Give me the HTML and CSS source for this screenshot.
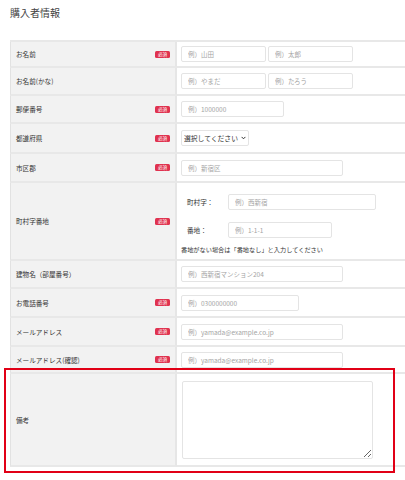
FILE: index.html
```html
<!DOCTYPE html>
<html lang="ja">
<head>
<meta charset="utf-8">
<title>購入者情報</title>
<link rel="stylesheet" href="styles.css">
</head>
<body>
<div class="page">
  <h1 class="title">購入者情報</h1>
  <div class="form">
    <div class="label"><span>お名前</span><span class="req">必須</span></div>
    <div class="value">
      <input class="in w85" type="text" placeholder="例）山田">
      <input class="in w85" type="text" placeholder="例）太郎">
    </div>

    <div class="label"><span>お名前(かな)</span></div>
    <div class="value">
      <input class="in w85" type="text" placeholder="例）やまだ">
      <input class="in w85" type="text" placeholder="例）たろう">
    </div>

    <div class="label"><span>郵便番号</span><span class="req">必須</span></div>
    <div class="value">
      <input class="in w103" type="text" placeholder="例）1000000">
    </div>

    <div class="label"><span>都道府県</span><span class="req">必須</span></div>
    <div class="value">
      <div class="select-wrap">
        <select class="sel"><option>選択してください</option></select>
        <svg class="chev" width="5" height="4" viewBox="0 0 5 4"><path d="M0.6 0.9 L2.5 2.8 L4.4 0.9" fill="none" stroke="#333" stroke-width="1"/></svg>
      </div>
    </div>

    <div class="label"><span>市区郡</span><span class="req">必須</span></div>
    <div class="value">
      <input class="in w162" type="text" placeholder="例）新宿区">
    </div>

    <div class="label"><span>町村字番地</span><span class="req">必須</span></div>
    <div class="value addr">
      <div class="sub"><span class="sublabel">町村字：</span><input class="in w148" type="text" placeholder="例）西新宿"></div>
      <div class="sub sub2"><span class="sublabel">番地：</span><input class="in w104" type="text" placeholder="例）1-1-1"></div>
      <p class="note">番地がない場合は「番地なし」と入力してください</p>
    </div>

    <div class="label"><span>建物名（部屋番号）</span></div>
    <div class="value">
      <input class="in w162" type="text" placeholder="例）西新宿マンション204">
    </div>

    <div class="label"><span>お電話番号</span><span class="req">必須</span></div>
    <div class="value">
      <input class="in w118" type="text" placeholder="例）0300000000">
    </div>

    <div class="label"><span>メールアドレス</span><span class="req">必須</span></div>
    <div class="value">
      <input class="in w162" type="text" placeholder="例）yamada@example.co.jp">
    </div>

    <div class="label"><span>メールアドレス(確認)</span><span class="req">必須</span></div>
    <div class="value">
      <input class="in w162" type="text" placeholder="例）yamada@example.co.jp">
    </div>

    <div class="label"><span>備考</span></div>
    <div class="value">
      <textarea class="memo"></textarea>
    </div>
  </div>
  <div class="highlight"></div>
</div>
</body>
</html>
```

FILE: styles.css
```css
* { box-sizing: border-box; }

html, body {
  margin: 0;
  padding: 0;
  background: #fff;
}

body {
  font-family: "Noto Sans CJK JP", "Noto Sans", sans-serif;
  color: #333;
}

.page {
  position: relative;
  min-height: 480px;
  padding: 7px 0 0 10px;
}

.title {
  margin: 0 0 21px;
  font-size: 10px;
  line-height: 12px;
  font-weight: normal;
  color: #444;
}

.form {
  display: grid;
  grid-template-columns: 167px 1fr;
  grid-template-rows: 26px 28px 28px 30px 29px 78px 28px 29px 29px 27px 93px;
  border-top: 2px solid #e8e8e8;
}

.label {
  display: flex;
  align-items: center;
  justify-content: space-between;
  padding: 0 5px 0 5px;
  background: #f2f2f2;
  border-left: 1px solid #e2e2e2;
  border-right: 2px solid #e6e6e6;
  border-bottom: 2px solid #e8e8e8;
  font-size: 6.6px;
  line-height: 8px;
  color: #333;
}

.req {
  display: inline-flex;
  align-items: center;
  justify-content: center;
  width: 15px;
  height: 7px;
  border-radius: 1.5px;
  background: #e0324f;
  color: #fff;
  font-size: 4.6px;
  line-height: 7px;
}

.value {
  display: flex;
  align-items: center;
  gap: 2px;
  padding: 0 0 0 4px;
  border-bottom: 2px solid #e8e8e8;
}

.in {
  height: 16px;
  padding: 0 6px;
  border: 1px solid #e4e4e4;
  border-radius: 2px;
  background: #fff;
  font-family: "Noto Sans CJK JP", "Noto Sans", sans-serif;
  font-size: 6.5px;
  color: #333;
  outline: none;
}

.in::placeholder { color: #a4a4a4; }

.w85 { width: 85px; }
.w103 { width: 103px; }
.w104 { width: 104px; }
.w118 { width: 118px; }
.w148 { width: 148px; }
.w162 { width: 162px; }

.select-wrap {
  position: relative;
  width: 68px;
  height: 16px;
}

.sel {
  display: block;
  appearance: none;
  -webkit-appearance: none;
  width: 68px;
  height: 16px;
  margin: 0;
  padding: 0 0 0 2px;
  border: 1px solid #e4e4e4;
  border-radius: 2px;
  background: #fff;
  font-family: "Noto Sans CJK JP", "Noto Sans", sans-serif;
  font-size: 6.8px;
  line-height: 14px;
  color: #333;
}

.chev {
  position: absolute;
  right: 3px;
  top: 6px;
}

.addr {
  flex-direction: column;
  align-items: flex-start;
  justify-content: flex-start;
  gap: 0;
  padding-top: 11px;
}

.sub {
  display: flex;
  align-items: center;
  padding-left: 6px;
}

.sub2 { margin-top: 12px; }

.sublabel {
  width: 41px;
  font-size: 6.6px;
  line-height: 8px;
  color: #333;
}

.note {
  margin: 8px 0 0;
  font-size: 6.2px;
  line-height: 8px;
  color: #333;
}

.memo {
  display: block;
  width: 191px;
  height: 78px;
  margin-left: 1px;
  border: 1px solid #e4e4e4;
  border-radius: 2px;
  background: #fff;
  resize: both;
  outline: none;
}

.highlight {
  position: absolute;
  left: 4px;
  top: 368px;
  width: 391px;
  height: 105px;
  border: 2px solid #e10016;
  pointer-events: none;
}
```
